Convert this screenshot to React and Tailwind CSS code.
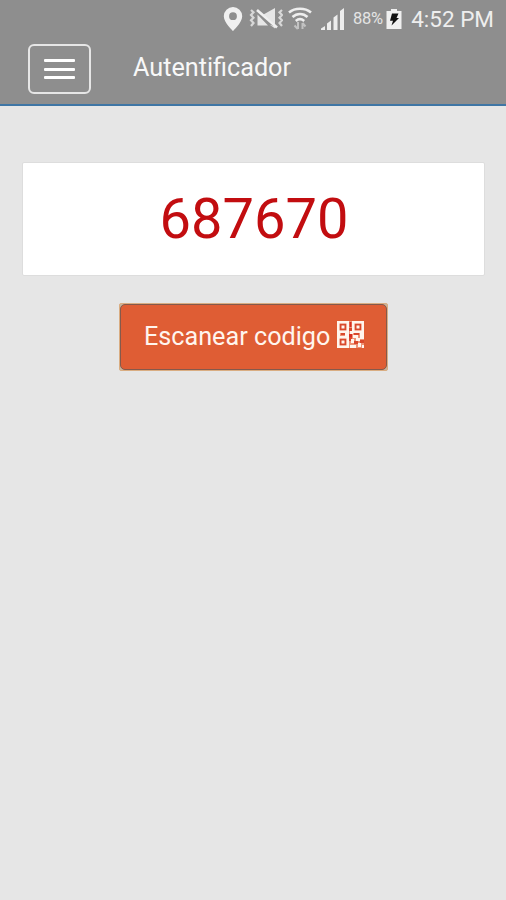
function PinIcon() {
  return (
    <svg className="h-6 w-5 shrink-0" viewBox="0 0 20 24" fill="#f0f0f0">
      <path fillRule="evenodd" d="M10 0a9.2 9.2 0 0 0-9.2 9.2C.8 15.500 10 24 10 24s9.200-8.500 9.200-14.800A9.200 9.200 0 0 0 10 0Zm0 5.300a3.900 3.900 0 1 1 0 7.800 3.900 3.900 0 0 1 0-7.800Z" />
    </svg>
  );
}

function MuteVibrateIcon() {
  return (
    <svg className="h-6 w-[34px] shrink-0" viewBox="0 0 34 24" fill="none">
      <path d="M14.500 7.500 26 1v16.500ZM8.500 7.500v11H19ZM20.500 17.500l5.500 4v-2Z" fill="#e6e6e6" />
      <path d="M8 3 28 20.500" stroke="#f0f0f0" strokeWidth="2.600" />
      <path d="m2 3 2.500 2.300L2 8l2.500 2.700L2 13.300 4.500 16 2 19M33 3l-2.500 2.300L33 8l-2.500 2.700 2.500 2.600-2.500 2.700 2.500 3" stroke="#d8d8d8" strokeWidth="2.200" />
    </svg>
  );
}

function WifiIcon() {
  return (
    <svg className="h-6 w-6 shrink-0" viewBox="0 0 24 24" fill="none">
      <g stroke="#eeeeee" strokeWidth="2.600">
        <path d="M1 5.500c6-5 16-5 22 0" />
        <path d="M4.500 10c4.300-4 10.700-4 15 0" />
        <path d="M7.800 14c2.700-2.300 5.700-2.300 8.400 0" />
      </g>
      <path d="M10 15v7M6.500 18.500l3.300 3.500M14.500 22v-6M14.500 16l3 3.500" stroke="#c2c2c2" strokeWidth="2" />
    </svg>
  );
}

function SignalIcon() {
  return (
    <svg className="h-6 w-6 shrink-0" viewBox="0 0 24 24" fill="#ededed">
      <path d="M0 23v-1.500L4 19v4ZM6 23v-6.500l4-3V23ZM12.500 23V10.500l4-3V23ZM19 23V4l4-3v22Z" />
    </svg>
  );
}

function BatteryIcon() {
  return (
    <svg className="h-5 w-4 shrink-0" viewBox="0 0 16 20">
      <path d="M5 0h6v2h4.500v18H.5V2H5Z" fill="#f0f0f0" />
      <path d="M6 4.500h6.500L10.500 9H13l-7.500 7.500L7 11.800H4Z" fill="#111" />
    </svg>
  );
}

function QrIcon() {
  return (
    <svg className="h-[27px] w-[27px] shrink-0" viewBox="0 0 27 27" fill="#fff5ed">
      <path fill="#ee9275" d="M0 0h27v27H0Z" />
      <path fill="#d9482b" d="M2.500 2.500h7v7h-7ZM17.500 2.500h7v7h-7ZM2.500 17.500h7v7h-7ZM12 7h3v3h-3ZM11 16h4v4h-4ZM17 20h4v3h-4ZM23 19h4v3h-4ZM17 12h5v2h-5ZM4 12h4v2H4Z" />
      <path fillRule="evenodd" d="M0 0h12v12H0Zm2.500 2.500v7h7v-7ZM15 0h12v12H15Zm2.500 2.500v7h7v-7ZM0 15h12v12H0Zm2.500 2.500v7h7v-7Z" />
      <path d="M4.500 4.500h3v3h-3ZM19.500 4.500h3v3h-3ZM4.500 19.500h3v3h-3ZM0 12h3v3H0ZM8 12h4v3H8ZM13 10h3v3h-3ZM16 14h5v3h-5ZM23 12h4v6h-4ZM14 18h3v4h-3ZM19 17h4v3h-4ZM13 24h6v3h-6ZM21 22h3v4h-3ZM25 24h2v3h-2Z" />
      <path d="M12.500 1h2v5h-2ZM12 13h3v3h-3Z" fill="#d72e20" />
    </svg>
  );
}

function StatusBar() {
  return (
    <div className="flex h-[37px] items-center pr-3 pl-[223px] whitespace-nowrap">
      <PinIcon />
      <div className="ml-[6px]"><MuteVibrateIcon /></div>
      <div className="ml-[5px]"><WifiIcon /></div>
      <div className="ml-[9px]"><SignalIcon /></div>
      <span className="ml-[8px] w-[32px] pt-px text-[16.500px] leading-none tracking-[-0.300px] text-[#e4e4e4]">88%</span>
      <div className="ml-[3px]"><BatteryIcon /></div>
      <span className="ml-[9px] pt-px text-[22.500px] leading-none text-[#eeeeee]">4:52 PM</span>
    </div>
  );
}

export default function App() {
  return (
    <div className="min-h-[900px] w-full overflow-hidden bg-[#e6e6e6] font-['Roboto','Liberation_Sans',sans-serif]">
      <header className="h-[106px] border-b-2 border-[#3f76a5] bg-[#8e8e8e]">
        <StatusBar />
        <div className="flex items-start pt-[7px] pl-7">
          <button className="flex h-[50px] w-[63px] flex-col items-center justify-center gap-[5.500px] rounded-[6px] border-2 border-[#e6e6e6]">
            <span className="h-[3px] w-[31px] rounded-[1px] bg-white" />
            <span className="h-[3px] w-[31px] rounded-[1px] bg-white" />
            <span className="h-[3px] w-[31px] rounded-[1px] bg-white" />
          </button>
          <h1 className="ml-[42px] pt-[9px] text-[25.200px] leading-[30px] text-[#f8f8f8]">Autentificador</h1>
        </div>
      </header>
      <main className="flex flex-col items-center pt-14">
        <section className="flex h-[114px] w-[463px] items-center justify-center rounded-[2px] border border-[#dddddd] bg-white">
          <span className="pl-[2px] text-[56px] leading-none text-[#c20d10]">687670</span>
        </section>
        <div className="mt-[27px] ml-px h-[68px] w-[269px] rounded-[2px] border border-[#d9ad82] bg-[#c9b49c]">
          <button className="flex h-full w-full items-center rounded-[5px] border border-[#85594b] bg-[#df5d34] pl-[23px] text-[25.200px] text-[#fff5ee]">
            <span className="w-[193px] text-left leading-none whitespace-nowrap">Escanear codigo</span>
            <span className="-mt-[6px]"><QrIcon /></span>
          </button>
        </div>
      </main>
    </div>
  );
}
